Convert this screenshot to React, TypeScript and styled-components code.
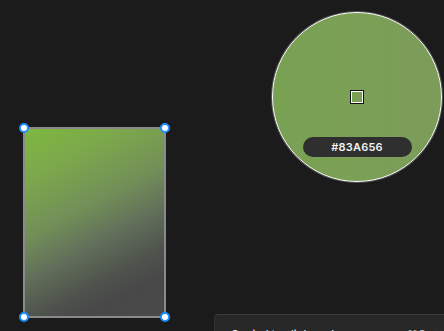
import { createGlobalStyle, styled } from "styled-components";

const GlobalStyle = createGlobalStyle`
  html, body {
    margin: 0;
    padding: 0;
    background: #1b1b1b;
    font-family: Inter, "Noto Sans", "Liberation Sans", sans-serif;
  }
`;

const Canvas = styled.div`
  position: relative;
  width: 444px;
  height: 331px;
  overflow: hidden;
  background: #1b1b1b;
`;

const Shape = styled.div`
  position: absolute;
  left: 23px;
  top: 127px;
  width: 139px;
  height: 187px;
  border: 2px solid #8a8a8a;
  background: linear-gradient(
    152deg,
    #7db840 0%,
    #7ca84b 20%,
    #728f58 42%,
    #62705a 58%,
    #4e524c 74%,
    #484848 84%,
    #4a4a4a 100%
  );
`;

const Handle = styled.span<{ $x: "left" | "right"; $y: "top" | "bottom" }>`
  position: absolute;
  ${(p) => p.$x}: -6px;
  ${(p) => p.$y}: -6px;
  width: 6px;
  height: 6px;
  border-radius: 50%;
  background: #ffffff;
  border: 2px solid #1d8fff;
`;

const Loupe = styled.div`
  position: absolute;
  left: 272px;
  top: 12px;
  width: 168px;
  height: 168px;
  border-radius: 50%;
  border: 1px solid #ffffff;
  box-shadow: 0 0 0 1px #555555;
  background: linear-gradient(90deg, #79a153 0%, #7b9f57 60%, #7c9c5a 100%);
  display: flex;
  flex-direction: column;
  align-items: center;
`;

const Reticle = styled.div`
  margin-top: 78px;
  width: 10px;
  height: 10px;
  border: 1px solid #ffffff;
  outline: 1px solid #111111;
  background: #79a055;
`;

const HexPill = styled.div`
  margin-top: 34px;
  width: 109px;
  height: 20px;
  border-radius: 10px;
  background: #2f2f2f;
  color: #f2f2f2;
  font-size: 11px;
  font-weight: 600;
  letter-spacing: 0.2px;
  display: flex;
  align-items: center;
  justify-content: center;
`;

const Toast = styled.div`
  position: absolute;
  left: 214px;
  top: 314px;
  width: 240px;
  height: 40px;
  background: #282828;
  border-top: 1px solid #3a3a3a;
  border-left: 1px solid #303030;
  border-radius: 4px 0 0 0;
  display: flex;
  align-items: flex-start;
  padding: 12px 0 0 16px;
  box-sizing: border-box;
  color: #e8e8e8;
  font-size: 11px;
  line-height: 14px;
  gap: 8px;
`;

const ToastText = styled.span`
  flex: 1;
  font-weight: 500;
`;

const ToastKey = styled.span`
  color: #bbbbbb;
`;

const Close = styled.span`
  width: 20px;
  color: #cccccc;
`;

export default function App() {
  return (
    <>
      <GlobalStyle />
      <Canvas>
        <Shape>
          <Handle $x="left" $y="top" />
          <Handle $x="right" $y="top" />
          <Handle $x="left" $y="bottom" />
          <Handle $x="right" $y="bottom" />
        </Shape>
        <Loupe>
          <Reticle />
          <HexPill>#83A656</HexPill>
        </Loupe>
        <Toast>
          <ToastText>Copied to clipboard</ToastText>
          <ToastKey>⌘C</ToastKey>
          <Close>✕</Close>
        </Toast>
      </Canvas>
    </>
  );
}
